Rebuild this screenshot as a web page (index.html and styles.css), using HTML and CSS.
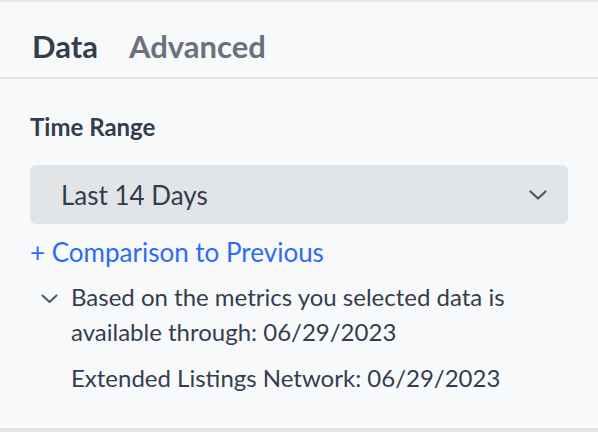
FILE: index.html
```html
<!DOCTYPE html>
<html lang="en">
<head>
    <meta charset="UTF-8">
    <meta name="viewport" content="width=device-width, initial-scale=1.0">
    <title>Data settings</title>
    <link rel="stylesheet" href="styles.css">
</head>
<body>
    <div class="panel">
        <div class="tabs">
            <span class="tab active">Data</span>
            <span class="tab">Advanced</span>
        </div>
        <div class="section">
            <div class="label">Time Range</div>
            <div class="select">
                <span>Last 14 Days</span>
                <svg class="chev" width="18" height="10" viewBox="0 0 18 10">
                    <path d="M1.5 1.5 L9 8.5 L16.5 1.5" fill="none" stroke="#4a5565" stroke-width="2.2" stroke-linecap="round" stroke-linejoin="round"/>
                </svg>
            </div>
            <a class="add-link" href="#">+ Comparison to Previous</a>
            <div class="info">
                <svg class="small-chev" width="17" height="10" viewBox="0 0 17 10">
                    <path d="M1.5 1.5 L8.5 8 L15.5 1.5" fill="none" stroke="#4a5565" stroke-width="2" stroke-linecap="round" stroke-linejoin="round"/>
                </svg>
                <div class="info-text">
                    <p>Based on the metrics you selected data is available through: 06/29/2023</p>
                    <p>Extended Listings Network: 06/29/2023</p>
                </div>
            </div>
        </div>
    </div>
</body>
</html>
```

FILE: styles.css
```css
body {
    margin: 0;
    font-family: Lato, "Noto Sans", sans-serif;
    background-color: #f8f9fb;
    color: #343d4e;
}
.panel {
    width: 598px;
    height: 432px;
    box-sizing: border-box;
    border-top: 2px solid #e3e5e8;
    border-bottom: 4px solid #e3e5e8;
    overflow: hidden;
}
.tabs {
    display: flex;
    gap: 31px;
    padding: 24px 30px 0 32px;
    height: 51px;
    border-bottom: 2px solid #e3e5e8;
}
.tab {
    font-size: 31px;
    font-weight: bold;
    color: #6b717c;
    line-height: 40px;
}
.tab.active {
    color: #343d4e;
}
.section {
    padding: 34px 30px 0 30px;
}
.label {
    font-size: 24px;
    font-weight: bold;
    line-height: 28px;
}
.select {
    display: flex;
    align-items: center;
    justify-content: space-between;
    margin-top: 24px;
    height: 59px;
    padding: 0 21px 0 31px;
    background: #e2e5e8;
    border-radius: 6px;
    font-size: 26px;
}
.add-link {
    display: block;
    margin-top: 11px;
    font-size: 26px;
    line-height: 34px;
    color: #2c6cf6;
    text-decoration: none;
}
.info {
    display: flex;
    margin-top: 10px;
    gap: 13px;
}
.small-chev {
    margin-top: 15px;
    margin-left: 11px;
    flex-shrink: 0;
}
.info-text p {
    margin: 0 0 11px 0;
    font-size: 24px;
    line-height: 35px;
}
```
